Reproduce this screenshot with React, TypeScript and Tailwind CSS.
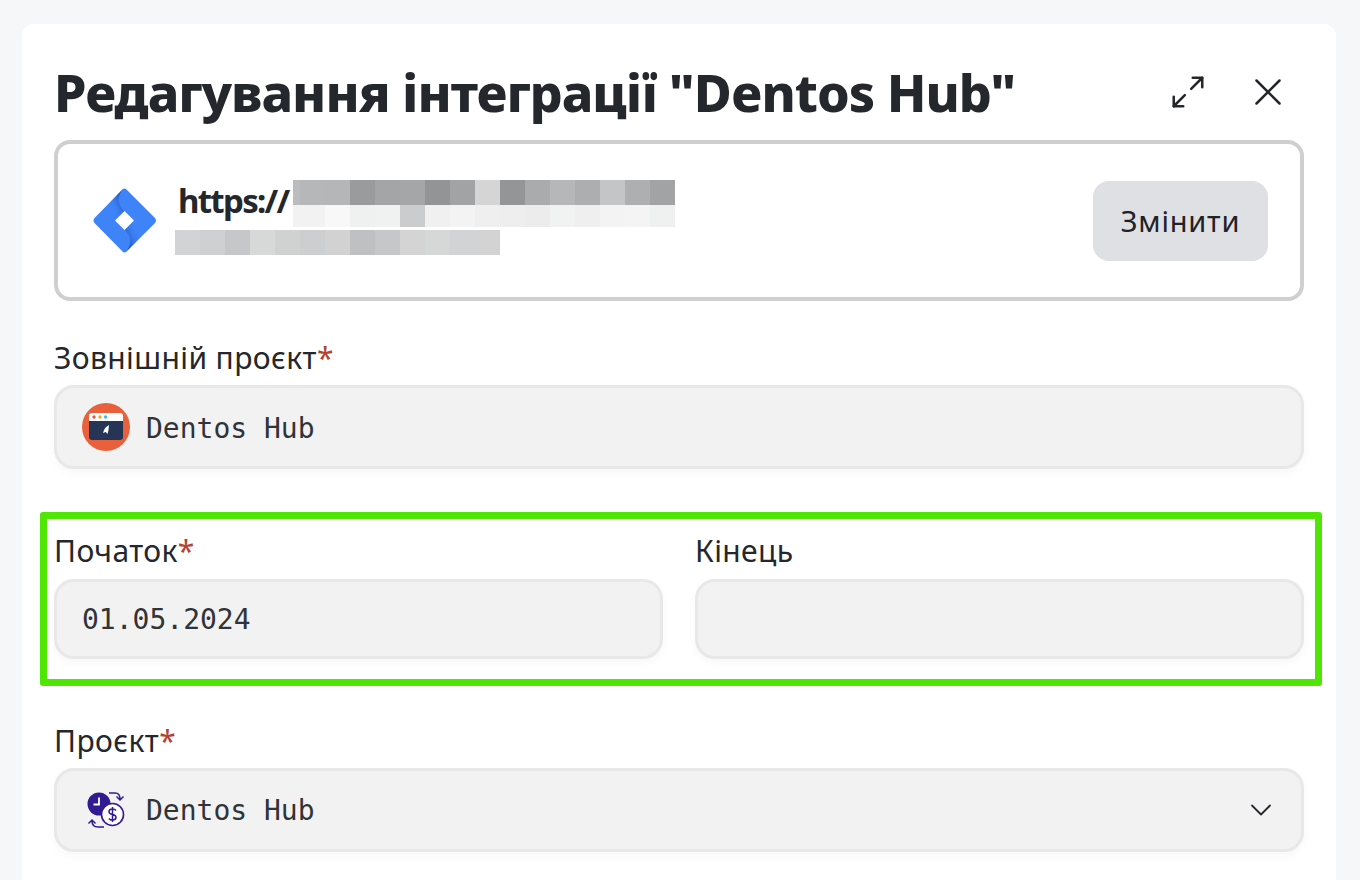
import React from 'react';
import { ChevronDown, Maximize2, X } from 'lucide-react';

const mono = 'font-["DejaVu_Sans_Mono","Liberation_Mono",monospace]';
const inputBox =
  'flex items-center rounded-[20px] border-[3px] border-[#e8e8e8] bg-[#f2f2f2] shadow-[0_4px_10px_rgba(0,0,0,0.03)]';

const topRow = [
  'w-[7px] bg-[#bbbcbd]', 'w-[25px] bg-[#b6b7b8]', 'w-[25px] bg-[#b5b6b7]', 'w-[25px] bg-[#9a9b9c]',
  'w-[25px] bg-[#a4a5a6]', 'w-[25px] bg-[#a5a6a7]', 'w-[25px] bg-[#939495]', 'w-[25px] bg-[#a2a3a4]',
  'w-[25px] bg-[#d5d5d5]', 'w-[25px] bg-[#949596]', 'w-[25px] bg-[#aaabac]', 'w-[25px] bg-[#b6b7b8]',
  'w-[25px] bg-[#adaeaf]', 'w-[25px] bg-[#c4c5c6]', 'w-[25px] bg-[#aeafb0]', 'w-[25px] bg-[#a2a3a4]',
];
const midRow = [
  'w-[32px] bg-[#f2f2f2]', 'w-[25px] bg-[#f8f8f8]', 'w-[25px] bg-[#eff0f0]', 'w-[25px] bg-[#f0f1f1]',
  'w-[25px] bg-[#cbccce]', 'w-[25px] bg-[#f0f0f0]', 'w-[25px] bg-[#f3f3f3]', 'w-[25px] bg-[#efefef]',
  'w-[25px] bg-[#eeeeee]', 'w-[25px] bg-[#ececec]', 'w-[25px] bg-[#f1f2f2]', 'w-[25px] bg-[#efefef]',
  'w-[25px] bg-[#f3f3f3]', 'w-[25px] bg-[#f4f4f4]', 'w-[25px] bg-[#eff0f0]',
];
const bottomRow = [
  'bg-[#d2d3d5]', 'bg-[#cfd0d2]', 'bg-[#c6c7c9]', 'bg-[#d7d9d8]', 'bg-[#d0d2d1]', 'bg-[#cdced0]', 'bg-[#d2d2d2]',
  'bg-[#bfc0c2]', 'bg-[#c6c7c9]', 'bg-[#d4d4d4]', 'bg-[#d6d8d7]', 'bg-[#d2d3d5]', 'bg-[#d3d3d3]',
];

const JiraLogo = () => (
  <svg viewBox="0 0 64 66" className="h-[66px] w-[64px] shrink-0">
    <defs>
      <linearGradient id="jiraTop" gradientUnits="userSpaceOnUse" x1="30" y1="13" x2="17" y2="19">
        <stop offset="0" stopColor="#1f4fb8" stopOpacity="0.85" />
        <stop offset="1" stopColor="#3f83f8" stopOpacity="0" />
      </linearGradient>
      <linearGradient id="jiraBottom" gradientUnits="userSpaceOnUse" x1="33" y1="52" x2="46" y2="46">
        <stop offset="0" stopColor="#1f4fb8" stopOpacity="0.85" />
        <stop offset="1" stopColor="#3f83f8" stopOpacity="0" />
      </linearGradient>
    </defs>
    <path
      d="M29.500 1.500 Q31.500 -0.500 33.500 1.500 L62 30 Q64 32.500 62 35 L33.500 63.500 Q31.500 65.500 29.500 63.500 L1.500 35 Q-0.500 32.500 1.500 30 Z"
      fill="#3f83f8"
    />
    <path d="M30.500 0.500 C24 8 24 16 31.500 23.500 L22 33 L10 21 Z" fill="url(#jiraTop)" />
    <path d="M32.500 64.500 C39 57 39 49 31.500 41.500 L41 32 L53 44 Z" fill="url(#jiraBottom)" />
    <path d="M31.500 23 L41 32.500 L31.500 42 L22 32.500 Z" fill="#ffffff" />
  </svg>
);

const AppIcon = () => (
  <svg viewBox="0 0 48 48" className="h-12 w-12 shrink-0">
    <circle cx="24" cy="24" r="24" fill="#e8603c" />
    <path d="M7 18 V13 Q7 10 10 10 H38 Q41 10 41 13 V18 Z" fill="#ffffff" />
    <path d="M7 18 H41 V34 Q41 37 38 37 H10 Q7 37 7 34 Z" fill="#263556" />
    <circle cx="12" cy="14" r="1.7" fill="#ef5350" />
    <circle cx="18" cy="14" r="1.7" fill="#f6a723" />
    <circle cx="23.500" cy="14" r="1.7" fill="#42bdea" />
    <path d="M27 22 L26.500 27 L25.500 31 L23.800 29 L21 30 L22 27 L23.500 24.500 Z" fill="#ffffff" />
  </svg>
);

const MoneyIcon = () => (
  <svg viewBox="0 0 40 38" className="h-[38px] w-10 shrink-0" fill="none">
    <circle cx="12" cy="13" r="11.500" fill="#301b92" />
    <path d="M12 6.500 V13.500 H6.500" stroke="#ffffff" strokeWidth="1.800" />
    <circle cx="25.500" cy="23.500" r="11" fill="#ffffff" stroke="#301b92" strokeWidth="1.600" />
    <path d="M29 19.500 Q28 18 25.500 18 Q22 18 22 20.700 Q22 23 25.500 23.500 Q29 24 29 26.500 Q29 29 25.500 29 Q23 29 22 27.500 M25.500 16 V31" stroke="#301b92" strokeWidth="1.500" />
    <path d="M22 2 H28 Q33 2 33 8 M29.500 5.500 L33 9 L36.500 5.500" stroke="#301b92" strokeWidth="1.500" />
    <path d="M17 36 H11 Q5 36 5 30 M1.500 32.500 L5 29 L8.500 32.500" stroke="#301b92" strokeWidth="1.500" />
  </svg>
);

const Label = ({ text, required }: { text: string; required?: boolean }) => (
  <label className="block text-[30px] leading-[34px] tracking-[0.4px] text-[#24272b]">
    {text}
    {required && <span className="text-[#b5412f]">*</span>}
  </label>
);

export default function App() {
  return (
    <div className='h-[880px] overflow-hidden bg-[#f6f7f9] pl-[22px] pr-6 pt-6 font-["Noto_Sans",sans-serif]'>
      <div className="h-[900px] rounded-xl bg-white px-8">
        <div className="flex h-[116px] items-center justify-between pt-[20px]">
          <h1 className="text-[52px] font-extrabold leading-[56px] tracking-[-1px] text-[#24272b]">
            Редагування інтеграції "Dentos Hub"
          </h1>
          <div className="flex items-center gap-[38px] pr-[13px]">
            <Maximize2 size={38} strokeWidth={1.6} className="text-[#24272b]" />
            <X size={46} strokeWidth={1.3} className="text-[#24272b]" />
          </div>
        </div>

        <div className="flex h-[161px] items-center rounded-2xl border-4 border-[#cfcfcf] pl-[35px] pr-8">
          <JiraLogo />
          <div className="mb-[6px] ml-[18px] flex-1">
            <div className="flex items-start">
              <span className="ml-[3px] w-[115px] text-[33px] font-bold leading-[42px] tracking-[-1.7px] text-[#24272b]">
                https://
              </span>
              <div>
                <div className="flex h-[25px]">
                  {topRow.map((c, i) => (
                    <div key={i} className={c} />
                  ))}
                </div>
                <div className="flex h-[22px]">
                  {midRow.map((c, i) => (
                    <div key={i} className={c} />
                  ))}
                </div>
              </div>
            </div>
            <div className="mt-[3px] flex h-[25px]">
              {bottomRow.map((c, i) => (
                <div key={i} className={`w-[25px] ${c}`} />
              ))}
            </div>
          </div>
          <button className="h-20 w-[175px] rounded-2xl bg-[#dfe0e4] text-[29px] tracking-[0.8px] text-[#1f2226]">
            Змінити
          </button>
        </div>

        <div className="mt-10">
          <Label text="Зовнішній проєкт" required />
          <div className={`mt-[10px] h-[84px] pl-[25px] ${inputBox}`}>
            <AppIcon />
            <span className={`ml-4 pt-[3px] text-[28px] text-[#303338] ${mono}`}>Dentos Hub</span>
          </div>
        </div>

        <div className="-ml-[14px] -mr-[18px] mt-[43px] h-[174px] rounded-[3px] border-[7px] border-[#4fe604] pl-[7px] pr-[11px] pt-[15px]">
          <div className="grid grid-cols-2 gap-8">
            <div>
              <Label text="Початок" required />
              <div className={`mt-[11px] h-20 pl-[25px] ${inputBox}`}>
                <span className={`pt-[1px] text-[28px] text-[#303338] ${mono}`}>01.05.2024</span>
              </div>
            </div>
            <div>
              <Label text="Кінець" />
              <div className={`mt-[11px] h-20 ${inputBox}`} />
            </div>
          </div>
        </div>

        <div className="mt-[38px]">
          <Label text="Проєкт" required />
          <div className={`mt-[10px] h-[84px] pl-[30px] pr-[22px] ${inputBox}`}>
            <MoneyIcon />
            <span className={`ml-[19px] flex-1 pt-[2px] text-[28px] text-[#303338] ${mono}`}>Dentos Hub</span>
            <ChevronDown size={36} strokeWidth={1.2} className="text-[#24272b]" />
          </div>
        </div>
      </div>
    </div>
  );
}
